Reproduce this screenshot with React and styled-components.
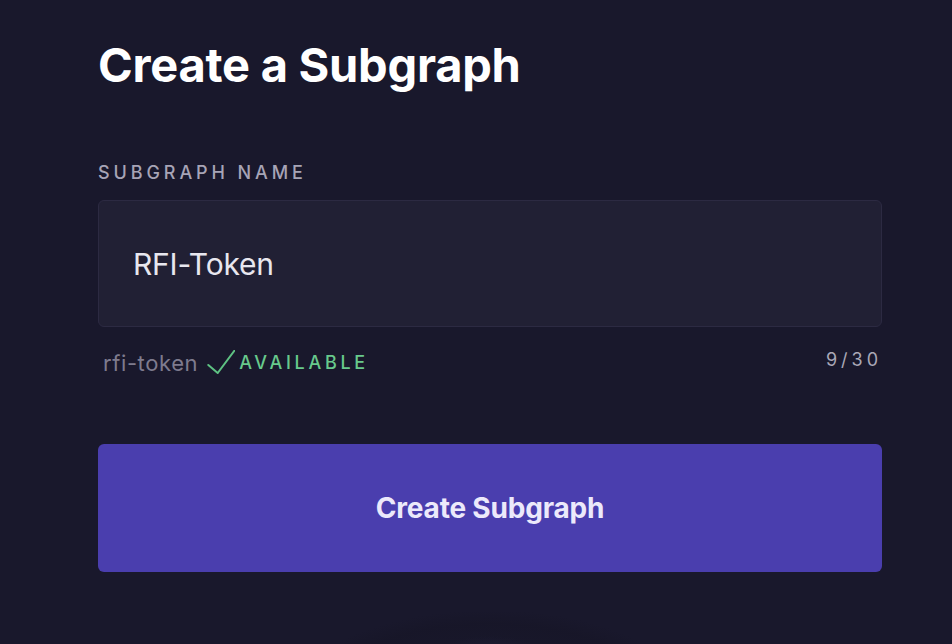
import React from "react";
import styled, { createGlobalStyle } from "styled-components";

const Global = createGlobalStyle`
  html, body { margin: 0; padding: 0; }
  body {
    background: #19182c;
    font-family: "Inter", "Open Sans", sans-serif;
    overflow: hidden;
  }
`;

const Page = styled.div`
  width: 952px;
  height: 644px;
  background:
    radial-gradient(ellipse 95px 66px at 490px 702px, rgba(48, 50, 80, 0.9), rgba(34, 34, 58, 0.6) 70%, rgba(25, 24, 44, 0) 100%),
    radial-gradient(ellipse 200px 92px at 490px 702px, rgba(27, 27, 48, 0.6), rgba(23, 22, 40, 0.9) 85%, rgba(25, 24, 44, 0) 100%),
    #19182c;
  overflow: hidden;
`;

const Form = styled.div`
  width: 784px;
  margin-left: 98px;
  padding-top: 37px;
  display: flex;
  flex-direction: column;
`;

const Title = styled.h1`
  margin: 0;
  font-size: 47px;
  line-height: 56px;
  font-weight: 700;
  color: #ffffff;
  letter-spacing: -0.25px;
`;

const Label = styled.label`
  margin-top: 70px;
  font-size: 18px;
  line-height: 20px;
  letter-spacing: 3.9px;
  color: #a7a4b6;
  font-weight: 500;
`;

const InputBox = styled.div`
  margin-top: 17px;
  height: 127px;
  box-sizing: border-box;
  border: 1.5px solid #2c2a42;
  border-radius: 6px;
  background: #212034;
  display: flex;
  align-items: center;
  padding-left: 34px;
  font-size: 30px;
  letter-spacing: -0.2px;
  color: #e8e7ef;
  font-weight: 400;
`;

const Meta = styled.div`
  margin-top: 23px;
  display: flex;
  align-items: flex-start;
  justify-content: space-between;
  padding-left: 5px;
`;

const Slug = styled.div`
  display: flex;
  align-items: center;
`;

const SlugText = styled.span`
  font-size: 22px;
  line-height: 26px;
  letter-spacing: 0.6px;
  color: #7e7b8e;
`;

const Check = styled.svg`
  margin-left: 9px;
  margin-right: 4px;
  align-self: flex-start;
`;

const Available = styled.span`
  font-size: 18px;
  line-height: 18px;
  letter-spacing: 3.7px;
  color: #68c98c;
  font-weight: 500;
`;

const Count = styled.span`
  font-size: 18px;
  line-height: 20px;
  letter-spacing: 4px;
  color: #aaa8b7;
`;

const Button = styled.button`
  margin-top: 68px;
  height: 128px;
  border: none;
  border-radius: 6px;
  background: #4a3eae;
  color: #ece9fb;
  font-family: inherit;
  font-size: 28px;
  font-weight: 700;
  letter-spacing: -0.2px;
  cursor: pointer;
`;

export default function App() {
  return (
    <Page>
      <Global />
      <Form>
        <Title>Create a Subgraph</Title>
        <Label>SUBGRAPH NAME</Label>
        <InputBox>RFI-Token</InputBox>
        <Meta>
          <Slug>
            <SlugText>rfi-token</SlugText>
            <Check width="28" height="24" viewBox="0 0 28 24" fill="none">
              <path d="M1.3 15 L10.7 23 L27.3 0.8" stroke="#5ec283" strokeWidth="2" strokeLinecap="round" strokeLinejoin="round" />
            </Check>
            <Available>AVAILABLE</Available>
          </Slug>
          <Count>9/30</Count>
        </Meta>
        <Button>Create Subgraph</Button>
      </Form>
    </Page>
  );
}
